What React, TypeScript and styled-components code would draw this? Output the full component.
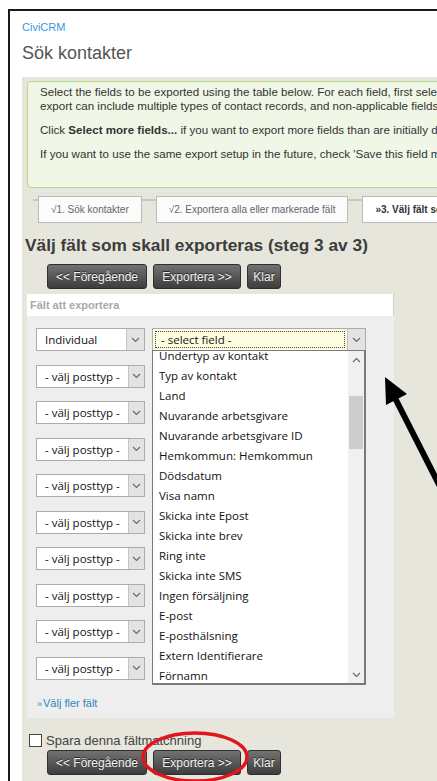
import styled, { createGlobalStyle } from 'styled-components';

const GlobalStyle = createGlobalStyle`
  html, body {
    margin: 0;
    padding: 0;
    background: #fff;
    overflow: hidden;
  }
  body {
    font-family: "Liberation Sans", Arial, sans-serif;
  }
`;

const Page = styled.div`
  position: relative;
  width: 437px;
  height: 781px;
  overflow: hidden;
  padding: 9px 0 0 8px;
  box-sizing: border-box;
`;

const Frame = styled.div`
  width: 700px;
  min-height: 800px;
  border-left: 2px solid #1b1b1b;
  border-top: 2px solid #1b1b1b;
  background: #fff;
  padding: 9px 0 0 12px;
`;

const Breadcrumb = styled.a`
  display: block;
  font-size: 11px;
  line-height: 14px;
  color: #3a97d8;
  text-decoration: none;
`;

const PageTitle = styled.h1`
  margin: 8px 0 0;
  font-size: 18px;
  line-height: 22px;
  font-weight: normal;
  color: #555;
`;

const Content = styled.div`
  margin-top: 13px;
  background: #e6e6dc;
  padding: 4px 0 0 3px;
  min-height: 720px;
`;

const HelpBox = styled.div`
  margin-left: 2px;
  width: 620px;
  background: #f1f7e7;
  border: 1px solid #b7d886;
  border-radius: 4px;
  padding: 3px 12px 26px;
  font-size: 11.6px;
  line-height: 14px;
  color: #333;
  white-space: nowrap;

  p {
    margin: 0 0 10px;
  }
  p:last-child {
    margin-bottom: 0;
  }
`;

const Steps = styled.div`
  position: relative;
  display: flex;
  gap: 14px;
  margin: 8px 0 0 2px;
  padding-left: 11px;

  &::before {
    content: "";
    position: absolute;
    left: 6px;
    right: 0;
    top: 3px;
    height: 2px;
    background: #c9c9c2;
  }
`;

const Step = styled.div<{ $current?: boolean }>`
  position: relative;
  height: 25px;
  padding: 0 12px;
  display: flex;
  align-items: center;
  white-space: nowrap;
  background: ${p => (p.$current ? '#fff' : '#fbfbfb')};
  border: 1px solid #bcbcb6;
  font-size: 10px;
  color: ${p => (p.$current ? '#333' : '#666')};
  font-weight: ${p => (p.$current ? 'bold' : 'normal')};
`;

const Heading = styled.h2`
  margin: 11px 0 0;
  font-size: 17.3px;
  line-height: 22px;
  font-weight: bold;
  color: #3c3c3c;
  white-space: nowrap;
`;

const ButtonRow = styled.div<{ $top: number }>`
  display: flex;
  gap: 6px;
  margin: ${p => p.$top}px 0 0 22px;
`;

const Button = styled.button<{ $w: number }>`
  width: ${p => p.$w}px;
  height: 25px;
  padding: 0;
  border: 1px solid #2f2f2f;
  border-radius: 3px;
  background: linear-gradient(#727272, #3d3d3d);
  color: #f2f2f2;
  font-family: "Liberation Sans", Arial, sans-serif;
  font-size: 12px;
  text-shadow: 0 -1px 0 #222;
`;

const Panel = styled.div`
  position: relative;
  margin: 5px 0 0 2px;
  width: 367px;
  background: #eee;
`;

const PanelHead = styled.div`
  height: 22px;
  background: #fff;
  border-right: 1px solid #cfcfcf;
  padding-left: 3px;
  display: flex;
  align-items: center;
  font-size: 11px;
  font-weight: bold;
  color: #a8a8a8;
`;

const PanelBody = styled.div`
  padding: 12px 0 7px 9px;
`;

const FieldGrid = styled.div`
  display: grid;
  grid-template-columns: 109px 214px;
  grid-auto-rows: 36.5px;
  column-gap: 7px;
`;

const Select = styled.div<{ $focus?: boolean }>`
  position: relative;
  height: 23px;
  box-sizing: border-box;
  border: 1px solid #acacac;
  background: ${p => (p.$focus ? '#fffde0' : '#fff')};
  display: flex;
  align-items: center;
  font-family: "Open Sans", "Noto Sans", sans-serif;
  font-size: 11.5px;
  color: #111;
`;

const SelectText = styled.span<{ $focus?: boolean }>`
  flex: 1;
  margin: 0 3px 0 3px;
  padding: 0 5px;
  line-height: 15px;
  white-space: nowrap;
  outline: ${p => (p.$focus ? '1px dotted #444' : 'none')};
`;

const SelectArrow = styled.span`
  width: 17px;
  align-self: stretch;
  border-left: 1px solid #c4c4c4;
  background: #e3e3e3;
  display: flex;
  align-items: center;
  justify-content: center;
`;

const DropList = styled.div`
  position: absolute;
  left: 125px;
  top: 56px;
  width: 214px;
  height: 335px;
  box-sizing: border-box;
  border: 1px solid #7a7a7a;
  border-right-width: 2px;
  border-bottom-width: 2px;
  background: #fff;
  overflow: hidden;
  display: flex;
  z-index: 2;
`;

const Options = styled.ul`
  flex: 1;
  list-style: none;
  margin: -5px 0 0;
  padding: 0;
  font-family: "Open Sans", "Noto Sans", sans-serif;
  font-size: 11.5px;
  color: #111;
`;

const Option = styled.li`
  height: 20px;
  line-height: 20px;
  padding-left: 6px;
  white-space: nowrap;
`;

const Scrollbar = styled.div`
  position: relative;
  width: 16px;
  background: #f0f0f0;
`;

const ScrollThumb = styled.div`
  position: absolute;
  left: 1px;
  right: 1px;
  top: 45px;
  height: 53px;
  background: #cdcdcd;
`;

const ScrollBtn = styled.div<{ $down?: boolean }>`
  position: absolute;
  left: 0;
  right: 0;
  height: 17px;
  ${p => (p.$down ? 'bottom: 0;' : 'top: 0;')}
  display: flex;
  align-items: center;
  justify-content: center;
`;

const MoreLink = styled.a`
  display: block;
  margin: 3px 0 0 1px;
  font-size: 11px;
  line-height: 14px;
  color: #2b86c4;
  text-decoration: none;

  span {
    font-size: 9px;
    margin-right: 1px;
  }
`;

const SaveRow = styled.label`
  display: flex;
  align-items: center;
  gap: 4px;
  margin: 15px 0 0 4px;
  height: 14px;
  font-size: 13px;
  color: #444;
`;

const CheckBox = styled.span`
  width: 11px;
  height: 11px;
  border: 1px solid #444;
  background: #fff;
`;

const Annotations = styled.svg`
  position: absolute;
  left: 0;
  top: 0;
  pointer-events: none;
`;

const Chevron = ({ up = false }: { up?: boolean }) => (
  <svg width="9" height="6" viewBox="0 0 9 6">
    <path
      d={up ? 'M1 5 L4.5 1.5 L8 5' : 'M1 1 L4.5 4.5 L8 1'}
      fill="none"
      stroke="#6a6a6a"
      strokeWidth="1.2"
    />
  </svg>
);

const fieldOptions = [
  'Undertyp av kontakt',
  'Typ av kontakt',
  'Land',
  'Nuvarande arbetsgivare',
  'Nuvarande arbetsgivare ID',
  'Hemkommun: Hemkommun',
  'Dödsdatum',
  'Visa namn',
  'Skicka inte Epost',
  'Skicka inte brev',
  'Ring inte',
  'Skicka inte SMS',
  'Ingen försäljning',
  'E-post',
  'E-posthälsning',
  'Extern Identifierare',
  'Förnamn',
];

const rows = Array.from({ length: 10 }, (_, i) => (i === 0 ? 'Individual' : '- välj posttyp -'));

const Buttons = ({ top }: { top: number }) => (
  <ButtonRow $top={top}>
    <Button $w={100}>&lt;&lt; Föregående</Button>
    <Button $w={88}>Exportera &gt;&gt;</Button>
    <Button $w={34}>Klar</Button>
  </ButtonRow>
);

export default function App() {
  return (
    <>
      <GlobalStyle />
      <Page>
        <Frame>
          <Breadcrumb>CiviCRM</Breadcrumb>
          <PageTitle>Sök kontakter</PageTitle>
          <Content>
            <HelpBox>
              <p>
                Select the fields to be exported using the table below. For each field, first select the contact type that applies, then choose a field.
                <br />
                export can include multiple types of contact records, and non-applicable fields will be empty (e.g. Custom Fields for Individuals).
              </p>
              <p>
                Click <b>Select more fields...</b> if you want to export more fields than are initially displayed in the table.
              </p>
              <p>If you want to use the same export setup in the future, check 'Save this field mapping' at the bottom of the page before continuing.</p>
            </HelpBox>

            <Steps>
              <Step>√1. Sök kontakter</Step>
              <Step>√2. Exportera alla eller markerade fält</Step>
              <Step $current>»3. Välj fält som skall exporteras</Step>
            </Steps>

            <Heading>Välj fält som skall exporteras (steg 3 av 3)</Heading>
            <Buttons top={8} />

            <Panel>
              <PanelHead>Fält att exportera</PanelHead>
              <PanelBody>
                <FieldGrid>
                  {rows.map((label, idx) => [
                    <Select key={`type-${idx}`}>
                      <SelectText>{label}</SelectText>
                      <SelectArrow>
                        <Chevron />
                      </SelectArrow>
                    </Select>,
                    idx === 0 ? (
                      <Select key="field-0" $focus>
                        <SelectText $focus>- select field -</SelectText>
                        <SelectArrow>
                          <Chevron />
                        </SelectArrow>
                      </Select>
                    ) : (
                      <div key={`field-${idx}`} />
                    ),
                  ])}
                </FieldGrid>
                <MoreLink>
                  <span>»</span>Välj fler fält
                </MoreLink>
              </PanelBody>

              <DropList>
                <Options>
                  {fieldOptions.map(opt => (
                    <Option key={opt}>{opt}</Option>
                  ))}
                </Options>
                <Scrollbar>
                  <ScrollBtn>
                    <Chevron up />
                  </ScrollBtn>
                  <ScrollThumb />
                  <ScrollBtn $down>
                    <Chevron />
                  </ScrollBtn>
                </Scrollbar>
              </DropList>
            </Panel>

            <SaveRow>
              <CheckBox />
              Spara denna fältmatchning
            </SaveRow>
            <Buttons top={3} />
          </Content>
        </Frame>

        <Annotations width="437" height="781" viewBox="0 0 437 781">
          <ellipse cx="195" cy="757" rx="52" ry="24" fill="none" stroke="#e3141c" strokeWidth="3.5" />
          <line x1="394" y1="396" x2="452" y2="510" stroke="#000" strokeWidth="6" />
          <polygon points="385,377 407,394 386,405" fill="#000" />
        </Annotations>
      </Page>
    </>
  );
}
